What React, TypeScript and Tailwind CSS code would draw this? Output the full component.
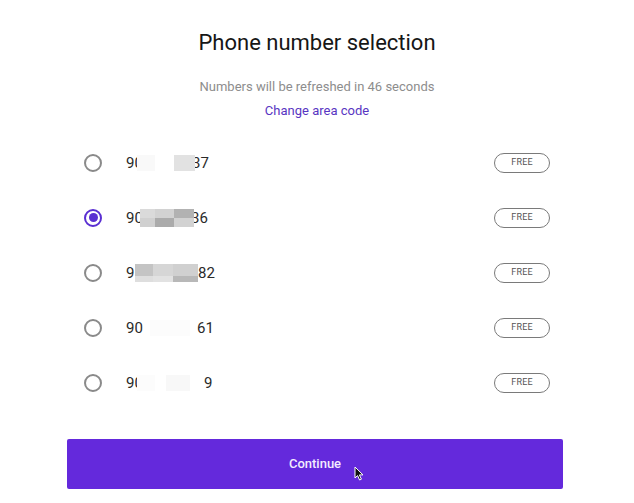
import React from "react";

type Mask = { l: number; w: number; t: number; h: number; c: string };
type Row = { a: string; b: string; bx: number; masks: Mask[]; selected?: boolean };

const rows: Row[] = [
  {
    a: "90",
    b: "37",
    bx: 66,
    masks: [
      { l: 11, w: 18, t: 2, h: 16, c: "#f9f9f9" },
      { l: 48, w: 21, t: 2, h: 16, c: "#e2e2e2" },
    ],
  },
  {
    a: "90",
    b: "36",
    bx: 65,
    selected: true,
    masks: [
      { l: 14, w: 15, t: 1, h: 9, c: "#dadada" },
      { l: 29, w: 19, t: 1, h: 9, c: "#d2d2d2" },
      { l: 48, w: 20, t: 1, h: 9, c: "#b2b2b2" },
      { l: 14, w: 15, t: 10, h: 9, c: "#d0d0d0" },
      { l: 29, w: 19, t: 10, h: 9, c: "#ababab" },
      { l: 48, w: 20, t: 10, h: 9, c: "#d2d2d2" },
    ],
  },
  {
    a: "9",
    b: "82",
    bx: 72,
    masks: [
      { l: 9, w: 18, t: 1, h: 12, c: "#c4c4c4" },
      { l: 27, w: 20, t: 1, h: 12, c: "#d6d6d6" },
      { l: 47, w: 25, t: 1, h: 12, c: "#d0d0d0" },
      { l: 9, w: 18, t: 13, h: 6, c: "#dedede" },
      { l: 27, w: 20, t: 13, h: 6, c: "#e2e2e2" },
      { l: 47, w: 25, t: 13, h: 6, c: "#b8b8b8" },
    ],
  },
  {
    a: "90",
    b: "61",
    bx: 71,
    masks: [{ l: 24, w: 40, t: 2, h: 16, c: "#fcfcfc" }],
  },
  {
    a: "90",
    b: "9",
    bx: 78,
    masks: [
      { l: 11, w: 18, t: 2, h: 16, c: "#fcfcfc" },
      { l: 40, w: 24, t: 2, h: 16, c: "#f8f8f8" },
    ],
  },
];

function Radio({ selected }: { selected?: boolean }) {
  if (selected) {
    return (
      <div className="w-[18px] h-[18px] rounded-full border-2 border-[#5a2fd2] flex items-center justify-center shrink-0">
        <div className="w-[9px] h-[9px] rounded-full bg-[#5a2fd2]" />
      </div>
    );
  }
  return <div className="w-[18px] h-[18px] rounded-full border-2 border-[#8a8a8a] shrink-0" />;
}

export default function App() {
  return (
    <div
      className="w-[634px] h-[503px] bg-white flex flex-col overflow-hidden"
      style={{ fontFamily: "Roboto, 'Liberation Sans', sans-serif" }}
    >
      <h1 className="mt-[29px] text-center text-[22px] leading-[28px] text-[#161616]">
        Phone number selection
      </h1>
      <p className="mt-[21px] text-center text-[13px] leading-[18px] text-[#8d8d8d]">
        Numbers will be refreshed in 46 seconds
      </p>
      <p className="mt-[6px] text-center text-[13px] leading-[18px] text-[#5835c2]">
        Change area code
      </p>
      <div className="mt-[15px] flex flex-col">
        {rows.map((r, i) => (
          <div key={i} className="h-[55px] flex items-center pl-[84px] pr-[84px]">
            <Radio selected={r.selected} />
            <div className="relative ml-[24px] w-[100px] h-[20px] text-[15px] leading-[20px] text-[#2a2a2a]">
              <span className="absolute left-0 top-0">{r.a}</span>
              <span className="absolute top-0" style={{ left: r.bx }}>
                {r.b}
              </span>
              {r.masks.map((m, j) => (
                <div
                  key={j}
                  className="absolute"
                  style={{ left: m.l, width: m.w, top: m.t, height: m.h, background: m.c }}
                />
              ))}
            </div>
            <div className="ml-auto w-[56px] h-[20px] rounded-full border-[1.5px] border-[#7a7a7a] flex items-center justify-center text-[9px] text-[#555] tracking-[0.2px]">
              FREE
            </div>
          </div>
        ))}
      </div>
      <div className="relative mt-[29px] ml-[67px] w-[496px] h-[50px] bg-[#6429dc] rounded-[2px] flex items-center justify-center text-[13px] text-[#f3ecff] font-medium">
        Continue
        <svg
          className="absolute left-[287px] top-[27px]"
          width="10"
          height="15"
          viewBox="0 0 10 15"
        >
          <path d="M1 1 L1 12 L3.6 9.6 L5.6 14 L7.4 13.2 L5.4 8.9 L9 8.9 Z" fill="#111" stroke="#fff" strokeWidth="1" />
        </svg>
      </div>
    </div>
  );
}
